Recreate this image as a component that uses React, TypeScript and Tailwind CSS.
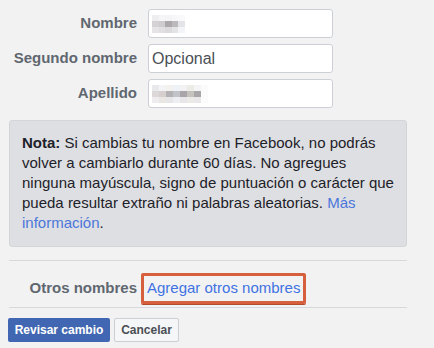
const blur1 = [
  ["#eeeef1", "#f6f6f8", "#f4f4f6", "#f7f7f9", "#f9f9fb"],
  ["#d5d2d6", "#cfccd0", "#aba7ab", "#bcb9bd", "#e3e4e8"],
  ["#e6e4e7", "#e1dfe2", "#dcdadd", "#e4e3e6", "#f2f4f7"],
];
const blur2 = [
  ["#e9e8eb", "#f4f4f6", "#f4f2ef", "#eef2f7", "#f2f2f4", "#ecebe6", "#f4f4f6", "#fbfbfb"],
  ["#dcd8d9", "#d6cfcd", "#b4b1b5", "#c2c3c9", "#a9a4a8", "#c3c2bc", "#a9a6aa", "#fbfbfb"],
  ["#eeecee", "#e9e6e4", "#e6e6e8", "#eceef1", "#e8e6e8", "#eceae6", "#e8e8ea", "#fbfbfb"],
];

const Blur = ({ rows, w }: { rows: string[][]; w: string }) => (
  <div className="flex flex-col">
    {rows.map((r, i) => (
      <div key={i} className="flex">
        {r.map((c, j) => (
          <span key={j} className={`block h-[6px] ${w}`} style={{ backgroundColor: c }} />
        ))}
      </div>
    ))}
  </div>
);

const Row = ({ label, children }: { label: string; children: React.ReactNode }) => (
  <div className="flex items-center">
    <label className="w-[137px] text-right text-[15px] font-bold text-[#606770]">{label}</label>
    <div className="ml-[11px] w-[185px] h-[29px] bg-white border border-[#ccd0d5] rounded-[3px] flex items-center px-[3px]">
      {children}
    </div>
  </div>
);

export default function App() {
  return (
    <div
      className="w-[434px] h-[348px] bg-[#f2f2f2] overflow-hidden"
      style={{ fontFamily: "'Liberation Sans', Arial, sans-serif" }}
    >
      {/* name inputs */}
      <div className="flex flex-col gap-[6px] pt-[9px]">
        <Row label="Nombre">
          <Blur rows={blur1} w="w-[6.6px]" />
        </Row>
        <Row label="Segundo nombre">
          <span className="text-[16px] text-[#4b4f56]">Opcional</span>
        </Row>
        <Row label="Apellido">
          <Blur rows={blur2} w="w-[7px]" />
        </Row>
      </div>

      {/* note */}
      <div className="mt-[12px] mx-[9px] w-[398px] bg-[#dddfe2] border border-[#d3d5d9] rounded-[3px] pl-[12px] pr-[1px] pt-[12px] pb-[13px] text-[15px] leading-[20px] text-[#1d2129]">
        <span className="font-bold">Nota:</span> Si cambias tu nombre en Facebook, no podrás
        <br />
        volver a cambiarlo durante 60 días. No agregues
        <br />
        ninguna mayúscula, signo de puntuación o carácter que
        <br />
        pueda resultar extraño ni palabras aleatorias. <a className="text-[#4b76db]">Más</a>
        <br />
        <a className="text-[#4b76db]">información</a>.
      </div>

      {/* other names */}
      <div className="mt-[13px] mx-[9px] w-[398px] border-t border-b border-[#d6d8dc] pt-[12px] pb-[3px] flex items-center">
        <span className="w-[128px] text-right text-[15px] font-bold text-[#606770]">Otros nombres</span>
        <div className="ml-[4px] border-[3px] border-[#d6603e] rounded-[2px] h-[31px] px-[3px] flex items-center shadow-[0_1px_0_#b34a2c]">
          <a className="text-[15px] text-[#3f73e3]">Agregar otros nombres</a>
        </div>
      </div>

      {/* buttons */}
      <div className="flex gap-[4px] mt-[10px] ml-[8px]">
        <button className="h-[24px] w-[102px] bg-[#4267b2] rounded-[2px] text-white text-[12px] font-bold">
          Revisar cambio
        </button>
        <button className="h-[24px] w-[65px] bg-[#f5f6f7] border border-[#ccd0d5] rounded-[2px] text-[#4b4f56] text-[12px] font-bold">
          Cancelar
        </button>
      </div>
    </div>
  );
}
